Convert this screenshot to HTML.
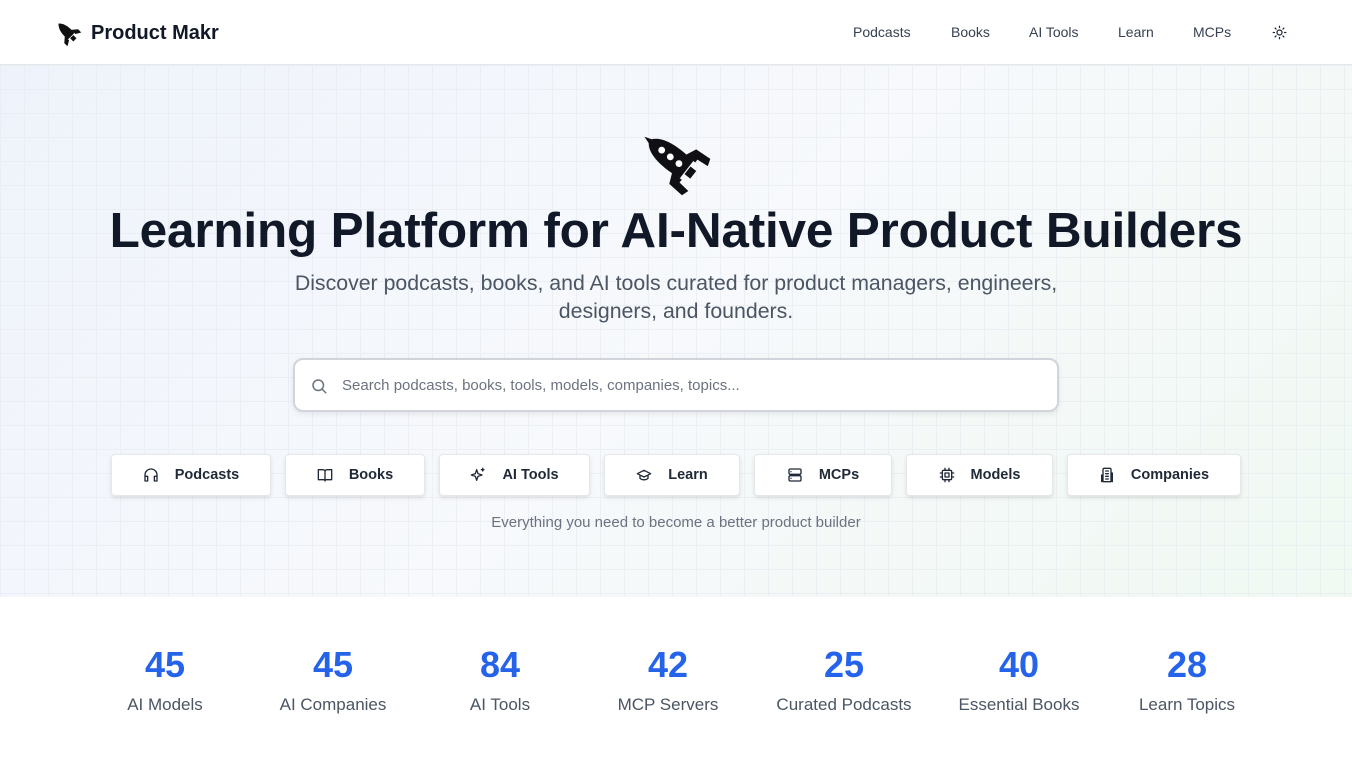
<!DOCTYPE html>
<html><head><meta charset="utf-8"><style>
*{margin:0;padding:0;box-sizing:border-box}
body{width:1352px;height:760px;overflow:hidden;font-family:"Liberation Sans",sans-serif;background:#fff;color:#111827;position:relative}
.nav{height:65px;border-bottom:1px solid #e5e7eb;position:relative;background:#fff}
.logo{position:absolute;left:53px;top:18px;display:flex;align-items:center;gap:8px;font-weight:700;font-size:20px;color:#111827}
.links{position:absolute;top:24px;font-size:14px;color:#374151}
.hero{position:absolute;top:65px;left:0;width:1352px;height:532px;
background:linear-gradient(135deg,#eef3fb 0%,#f7f9fc 50%,#f0f9f2 100%)}
.grid{position:absolute;inset:0;background-image:linear-gradient(#e6eaf0 1px,transparent 1px),linear-gradient(90deg,#e6eaf0 1px,transparent 1px);background-size:24px 24px;opacity:.6}
h1{position:absolute;top:202px;left:0;width:1352px;text-align:center;font-size:49.5px;font-weight:700;color:#111827;letter-spacing:-0.2px}
.sub{position:absolute;top:269px;left:0;width:1352px;text-align:center;font-size:21.3px;line-height:28px;color:#4b5563}
.search{position:absolute;left:293px;top:358px;width:766px;height:54px;border:2px solid #d1d5db;border-radius:10px;background:#fff;box-shadow:0 2px 6px rgba(0,0,0,.08)}
.search span{position:absolute;left:47px;top:17px;font-size:15px;color:#6b7280}
.btn{position:absolute;top:454px;height:42px;background:#fff;border:1px solid #e5e7eb;border-radius:4px;box-shadow:0 2px 4px rgba(0,0,0,.1);display:flex;align-items:center;justify-content:center;gap:16px;font-size:14.5px;font-weight:700;color:#1f2937}
.btn svg{width:16px;height:16px;fill:none;stroke:#1f2937;stroke-width:2;stroke-linecap:round;stroke-linejoin:round}
.tag{position:absolute;top:514px;width:1352px;text-align:center;font-size:15px;color:#6b7280}
.stat{position:absolute;top:0;width:180px;height:760px;text-align:center}
.stat b{display:block;position:absolute;top:644px;width:180px;font-size:36px;color:#2563eb}
.stat i{display:block;position:absolute;top:695px;width:180px;font-style:normal;font-size:17px;color:#4b5563}
</style></head><body>
<div class="nav">
<div class="logo"><svg width="30" height="30" viewBox="0 0 40 40"><g transform="rotate(-45 20 20)"><path d="M20 2c6 6 7 14 6 24h-12C13 16 14 8 20 2z" fill="#111"/><path d="M14 20l-7 6v6l7-4zM26 20l7 6v6l-7-4z" fill="#111"/><rect x="17" y="27" width="6" height="6" fill="#111"/></g></svg>Product Makr</div>
<div class="links" style="left:853px">Podcasts</div>
<div class="links" style="left:951px">Books</div>
<div class="links" style="left:1029px">AI Tools</div>
<div class="links" style="left:1118px">Learn</div>
<div class="links" style="left:1193px">MCPs</div>
<svg style="position:absolute;left:1272px;top:25px" width="15" height="15" viewBox="0 0 24 24" fill="none" stroke="#1f2937" stroke-width="2" stroke-linecap="round"><circle cx="12" cy="12" r="4"/><path d="M12 2v2M12 20v2M2 12h2M20 12h2M5 5l1.5 1.5M17.5 17.5L19 19M5 19l1.5-1.5M17.5 6.5L19 5"/></svg>
</div>
<div class="hero"><div class="grid"></div></div>
<svg style="position:absolute;left:632px;top:122px" width="90" height="76" viewBox="0 0 80 72"><g transform="translate(40 38) scale(1.15) rotate(-52)"><path d="M0 -34 L2 -28 C10 -22 11 -6 9 10 L-9 10 C-11 -6 -10 -22 -2 -28Z" fill="#0f0f14"/><circle cx="0" cy="-16" r="2.8" fill="#fff"/><circle cx="0" cy="-7" r="2.8" fill="#fff"/><circle cx="0" cy="2" r="2.8" fill="#fff"/><path d="M-9 2 L-18 6 L-19 20 L-13 22 L-12 12 L-9 12Z" fill="#0f0f14"/><path d="M9 2 L18 6 L19 20 L13 22 L12 12 L9 12Z" fill="#0f0f14"/><rect x="-4" y="11" width="8" height="6" fill="#0f0f14"/></g></svg>
<h1>Learning Platform for AI-Native Product Builders</h1>
<div class="sub">Discover podcasts, books, and AI tools curated for product managers, engineers,<br>designers, and founders.</div>
<div class="search"><svg style="position:absolute;left:15px;top:17px" width="18" height="18" viewBox="0 0 24 24" fill="none" stroke="#6b7280" stroke-width="2" stroke-linecap="round"><circle cx="11" cy="11" r="7"/><path d="M21 21l-5-5"/></svg><span>Search podcasts, books, tools, models, companies, topics...</span></div>
<div class="btn" style="left:111px;width:160px"><svg viewBox="0 0 24 24"><path d="M3 18v-6a9 9 0 0118 0v6M3 14h4v7H3zM17 14h4v7h-4z"/></svg>Podcasts</div>
<div class="btn" style="left:285px;width:140px"><svg viewBox="0 0 24 24"><path d="M2 4h7a3 3 0 013 3v14a2 2 0 00-2-2H2zM22 4h-7a3 3 0 00-3 3v14a2 2 0 012-2h8z"/></svg>Books</div>
<div class="btn" style="left:439px;width:151px"><svg viewBox="0 0 24 24"><path d="M10 4l2 6 6 2-6 2-2 6-2-6-6-2 6-2zM19 2v4M17 4h4"/></svg>AI Tools</div>
<div class="btn" style="left:604px;width:136px"><svg viewBox="0 0 24 24"><path d="M22 10L12 5 2 10l10 5 10-5zM6 12v5c3 3 9 3 12 0v-5"/></svg>Learn</div>
<div class="btn" style="left:754px;width:138px"><svg viewBox="0 0 24 24"><rect x="3" y="3" width="18" height="8" rx="2"/><rect x="3" y="13" width="18" height="8" rx="2"/><path d="M6 7h.01M6 17h.01"/></svg>MCPs</div>
<div class="btn" style="left:906px;width:147px"><svg viewBox="0 0 24 24"><rect x="5" y="5" width="14" height="14" rx="2"/><rect x="9" y="9" width="6" height="6"/><path d="M9 2v3M15 2v3M9 19v3M15 19v3M2 9h3M2 15h3M19 9h3M19 15h3"/></svg>Models</div>
<div class="btn" style="left:1067px;width:174px"><svg viewBox="0 0 24 24"><path d="M6 22V4a2 2 0 012-2h8a2 2 0 012 2v18zM6 12H4v10M18 9h2v13M10 6h4M10 10h4M10 14h4M10 18h4"/></svg>Companies</div>
<div class="tag">Everything you need to become a better product builder</div>
<div class="stat" style="left:75px"><b>45</b><i>AI Models</i></div>
<div class="stat" style="left:243px"><b>45</b><i>AI Companies</i></div>
<div class="stat" style="left:410px"><b>84</b><i>AI Tools</i></div>
<div class="stat" style="left:578px"><b>42</b><i>MCP Servers</i></div>
<div class="stat" style="left:754px"><b>25</b><i>Curated Podcasts</i></div>
<div class="stat" style="left:929px"><b>40</b><i>Essential Books</i></div>
<div class="stat" style="left:1097px"><b>28</b><i>Learn Topics</i></div>
</body></html>
